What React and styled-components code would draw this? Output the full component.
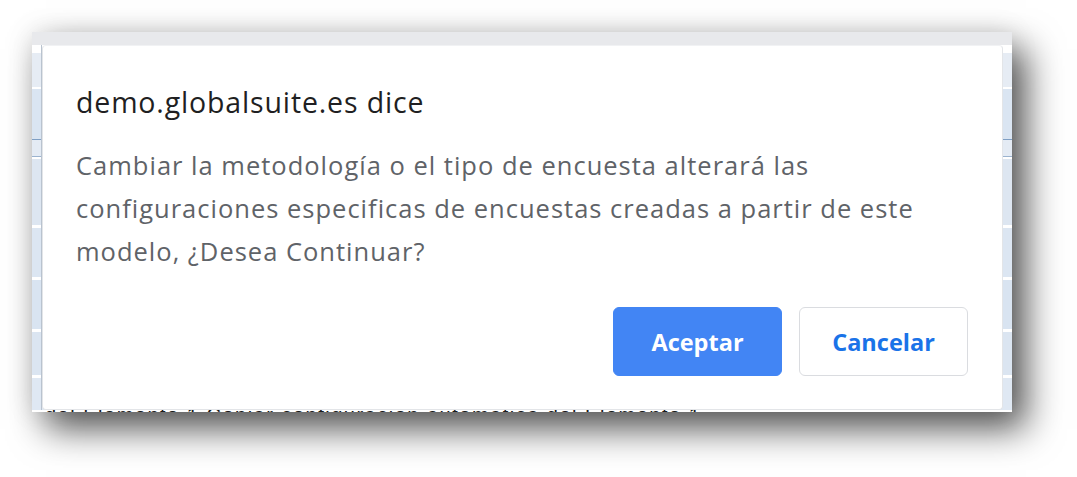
import React from 'react'
import styled, { createGlobalStyle } from 'styled-components'

const GlobalStyle = createGlobalStyle`
  html, body {
    margin: 0;
    padding: 0;
    background: #ffffff;
  }
  body {
    box-sizing: border-box;
    min-height: 100vh;
    padding: 32px 0 0 32px;
    font-family: 'Open Sans', 'Noto Sans', 'Liberation Sans', sans-serif;
  }
`

const Frame = styled.div`
  width: 980px;
  height: 380px;
  display: flex;
  flex-direction: column;
  background: #ffffff;
  box-shadow: 14px 17px 34px rgba(0, 0, 0, 0.66), 0 0 26px rgba(0, 0, 0, 0.1);
  overflow: hidden;
`

const TopBar = styled.div`
  height: 13px;
  flex: none;
  background: #e8e9ec;
`

// the page behind the alert: pale blue table rows
const Page = styled.div`
  flex: 1;
  display: grid;
  grid-template-columns: 10px 1fr 9px;
  grid-template-rows: 1fr 2px;
  background:
    linear-gradient(
      to bottom,
      #ffffff 0 8px,
      #e6ecf4 8px 42px,
      #ffffff 42px 44px,
      #dae5f2 44px 94px,
      #7f9fc4 94px 95px,
      #e4ebf4 95px 111px,
      #9bb3cf 111px 112px,
      #ffffff 112px 114px,
      #dde6f1 114px 180px,
      #ffffff 180px 183px,
      #dce6f2 183px 232px,
      #ffffff 232px 235px,
      #d9e4f1 235px 284px,
      #ffffff 284px 287px,
      #dbe5f1 287px 330px,
      #ffffff 330px 333px,
      #dfe8f3 333px 367px
    );
`

const SideEdge = styled.div`
  border-right: ${(p) => (p.$left ? '1px solid #b9c3cf' : '0')};
`

const Dialog = styled.div`
  background: #ffffff;
  border: 1px solid #e3e5e8;
  border-top-color: #f1f2f4;
  border-radius: 4px;
  padding: 38px 34px 33px 33px;
  display: flex;
  flex-direction: column;
  box-sizing: border-box;
`

const Title = styled.h1`
  margin: 0;
  font-weight: 400;
  font-size: 28.5px;
  line-height: 36px;
  color: #1f1f22;
  letter-spacing: 0.85px;
`

const Message = styled.p`
  margin: 24px 0 0;
  font-size: 25.5px;
  line-height: 43px;
  color: #5f6368;
  letter-spacing: 1px;
`

const Actions = styled.div`
  display: flex;
  justify-content: flex-end;
  gap: 17px;
  margin-top: auto;
`

const Button = styled.button`
  width: 169px;
  height: 69px;
  box-sizing: border-box;
  border-radius: 6px;
  font-family: inherit;
  font-size: 23.5px;
  font-weight: 700;
  cursor: pointer;
  border: 1px solid ${(p) => (p.$primary ? '#4285f4' : '#dadce0')};
  background: ${(p) => (p.$primary ? '#4285f4' : '#ffffff')};
  color: ${(p) => (p.$primary ? '#ffffff' : '#1a73e8')};
`

const BottomStrip = styled.div`
  grid-column: 1 / 4;
  overflow: hidden;
  background: #ffffff;
  padding-left: 13px;
`

const CutText = styled.div`
  margin-top: -5px;
  font-family: 'Liberation Sans', Arial, sans-serif;
  font-size: 20px;
  line-height: 20px;
  color: #1b1b1b;
  white-space: nowrap;
  letter-spacing: 1.5px;
`

export default function App() {
  return (
    <>
      <GlobalStyle />
      <Frame>
        <TopBar />
        <Page>
          <SideEdge $left />
          <Dialog>
            <Title>demo.globalsuite.es dice</Title>
            <Message>
              Cambiar la metodología o el tipo de encuesta alterará las
              <br />
              configuraciones especificas de encuestas creadas a partir de este
              <br />
              modelo, ¿Desea Continuar?
            </Message>
            <Actions>
              <Button $primary>Aceptar</Button>
              <Button>Cancelar</Button>
            </Actions>
          </Dialog>
          <SideEdge />
          <BottomStrip>
            <CutText>
              del Elemento 1 Copiar configuración automática del Elemento 1
            </CutText>
          </BottomStrip>
        </Page>
      </Frame>
    </>
  )
}
